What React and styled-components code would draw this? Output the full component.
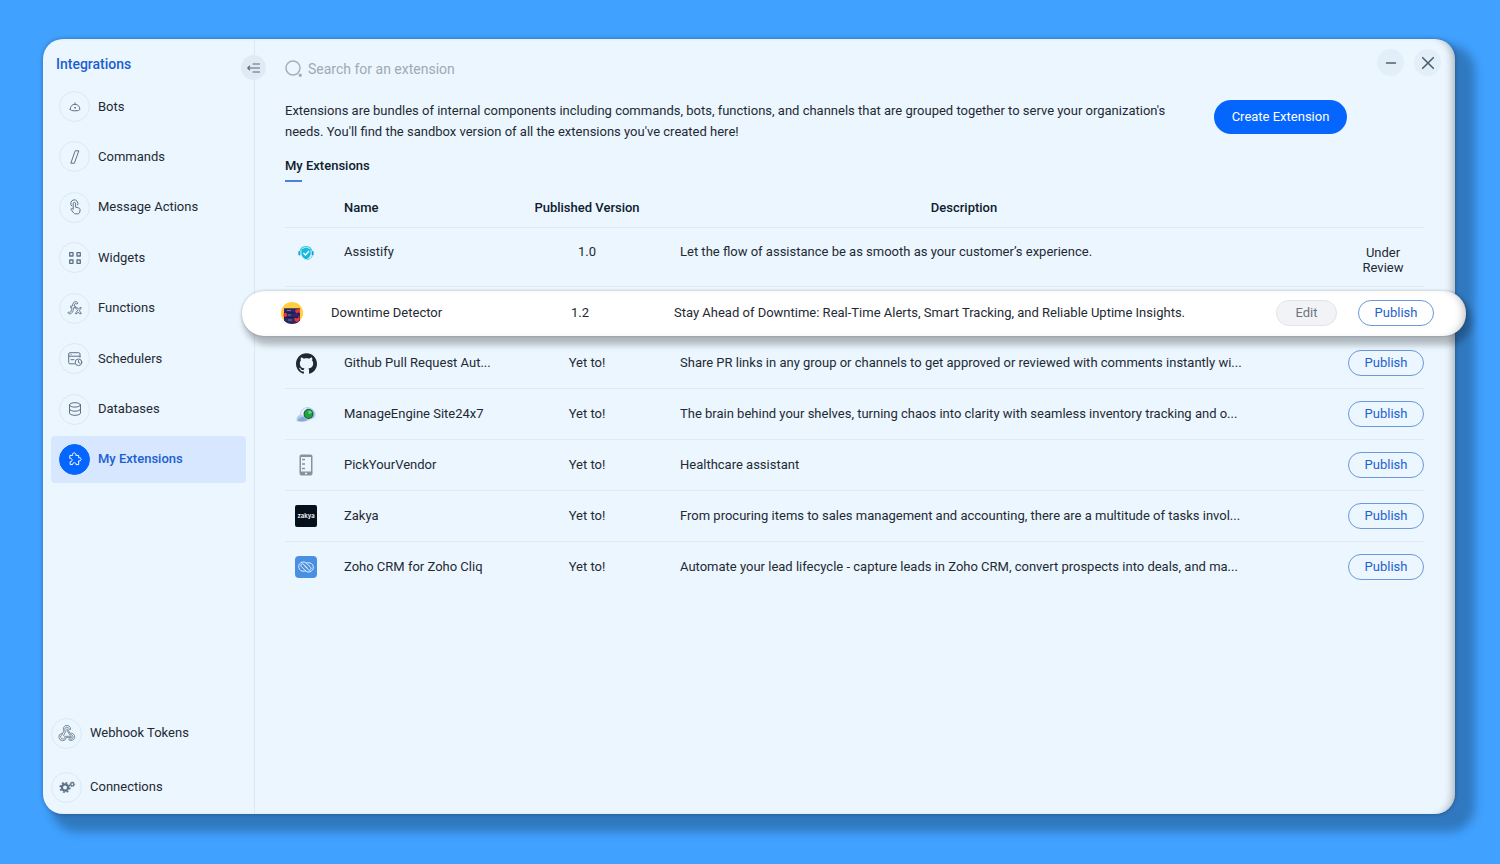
import styled, { createGlobalStyle } from "styled-components";
import { SiGithub } from "react-icons/si";

const Global = createGlobalStyle`
    * { box-sizing: border-box; }
    body { margin: 0; background: #40a1ff; }
`;

const navItems = [
    { label: "Bots", icon: BotIcon },
    { label: "Commands", icon: CommandIcon },
    { label: "Message Actions", icon: TapIcon },
    { label: "Widgets", icon: WidgetIcon },
    { label: "Functions", icon: FunctionIcon },
    { label: "Schedulers", icon: SchedulerIcon },
    { label: "Databases", icon: DatabaseIcon },
    { label: "My Extensions", icon: PuzzleIcon, active: true },
];

const footerItems = [
    { label: "Webhook Tokens", icon: WebhookIcon },
    { label: "Connections", icon: GearsIcon },
];

const extensions = [
    { name: "Assistify", version: "1.0", logo: <AssistifyLogo />, status: "Under Review", text: "Let the flow of assistance be as smooth as your customer’s experience." },
    { name: "Downtime Detector", version: "1.2", logo: <DowntimeLogo />, raised: true, text: "Stay Ahead of Downtime: Real-Time Alerts, Smart Tracking, and Reliable Uptime Insights." },
    { name: "Github Pull Request Aut...", version: "Yet to!", logo: <SiGithub size={21} color="#1f2933" />, text: "Share PR links in any group or channels to get approved or reviewed with comments instantly wi..." },
    { name: "ManageEngine Site24x7", version: "Yet to!", logo: <SiteLogo />, text: "The brain behind your shelves, turning chaos into clarity with seamless inventory tracking and o..." },
    { name: "PickYourVendor", version: "Yet to!", logo: <PhoneLogo />, text: "Healthcare assistant" },
    { name: "Zakya", version: "Yet to!", logo: <ZakyaLogo />, text: "From procuring items to sales management and accounting, there are a multitude of tasks invol..." },
    { name: "Zoho CRM for Zoho Cliq", version: "Yet to!", logo: <CrmLogo />, text: "Automate your lead lifecycle - capture leads in Zoho CRM, convert prospects into deals, and ma..." },
];

const App = () => {
    return (
        <Page>
            <Global />
            <Window>
                <Sidebar>
                    <Title>Integrations</Title>
                    <Toggle aria-label="Collapse sidebar"><CollapseIcon /></Toggle>
                    <NavList>
                        {navItems.map(({ label, icon: Icon, active }) => (
                            <li key={label}>
                                <NavLink href="#" $active={active}>
                                    <Bubble $active={active}><Icon /></Bubble>
                                    {label}
                                </NavLink>
                            </li>
                        ))}
                    </NavList>
                    <FooterList>
                        {footerItems.map(({ label, icon: Icon }) => (
                            <li key={label}>
                                <FooterLink href="#">
                                    <Bubble><Icon /></Bubble>
                                    {label}
                                </FooterLink>
                            </li>
                        ))}
                    </FooterList>
                </Sidebar>
                <Main>
                    <TopBar>
                        <Search>
                            <SearchIcon />
                            <SearchInput type="text" aria-label="Search for an extension" placeholder="Search for an extension" />
                        </Search>
                        <WindowButton aria-label="Minimize"><MinimizeIcon /></WindowButton>
                        <WindowButton aria-label="Close"><CloseIcon /></WindowButton>
                    </TopBar>
                    <Intro>
                        <IntroText>
                            Extensions are bundles of internal components including commands, bots, functions, and channels that are grouped together to serve your organization's needs. You'll find the sandbox version of all the extensions you've created here!
                        </IntroText>
                        <CreateButton>Create Extension</CreateButton>
                    </Intro>
                    <Heading>My Extensions</Heading>
                    <Table>
                        <thead>
                            <HeadRow>
                                <th aria-label="Logo" />
                                <HeadCell>Name</HeadCell>
                                <HeadCell $center>Published Version</HeadCell>
                                <HeadCell $center>Description</HeadCell>
                                <th aria-label="Actions" />
                            </HeadRow>
                        </thead>
                        <tbody>
                            {extensions.map((ext) => (
                                <ExtensionRow key={ext.name} {...ext} />
                            ))}
                        </tbody>
                    </Table>
                </Main>
            </Window>
        </Page>
    );
}

const ExtensionRow = ({ name, version, logo, text, status, raised }) => {
    const RowType = raised ? RaisedRow : status ? TallRow : Row;

    return (
        <RowType>
            <LogoCell>{logo}</LogoCell>
            <Cell>{name}</Cell>
            <Cell $center>{version}</Cell>
            <Cell>{text}</Cell>
            <ActionCell>
                {status && <Status>{status}</Status>}
                {raised && <EditButton>Edit</EditButton>}
                {!status && <PublishButton>Publish</PublishButton>}
            </ActionCell>
        </RowType>
    );
}

const Page = styled.div`
    min-height: 100vh;
    display: flex;
    padding: 39px 45px 50px 43px;
    background: #40a1ff;
    color: #1f2a33;
    font-family: Roboto, sans-serif;
    font-size: 13px;
    line-height: 20px;

    button, input {
        font: inherit;
    }

    button {
        cursor: pointer;
    }
`;

const Window = styled.div`
    flex: 1;
    min-width: 0;
    display: flex;
    border-radius: 20px;
    background: #ebf6ff;
    box-shadow:
        inset -8px 0 8px -6px rgba(0, 0, 0, .3),
        0 0 4px rgba(0, 0, 0, .3),
        14px 12px 10px 6px rgba(0, 0, 0, .25);
`;

const Sidebar = styled.nav`
    position: relative;
    width: 212px;
    flex-shrink: 0;
    display: flex;
    flex-direction: column;
    padding: 15px 8px 12px;
    border-right: 1px solid #dbe7f2;
`;

const Title = styled.h1`
    margin: 0 0 9px 5px;
    font-size: 14px;
    line-height: 20px;
    font-weight: 500;
    color: #1b5fd0;
`;

// sits on top of the sidebar border
const Toggle = styled.button`
    position: absolute;
    top: 16px;
    right: -12px;
    width: 25px;
    height: 25px;
    display: grid;
    place-items: center;
    padding: 0;
    border: 0;
    border-radius: 50%;
    background: #dfeaf5;
`;

const NavList = styled.ul`
    height: 400px;
    display: flex;
    flex-direction: column;
    justify-content: space-between;
    margin: 0;
    padding: 0;
    list-style: none;
`;

const FooterList = styled(NavList)`
    height: auto;
    gap: 24px;
    margin-top: auto;
`;

const NavLink = styled.a`
    height: 47px;
    display: flex;
    align-items: center;
    gap: 8px;
    padding: 0 8px;
    border-radius: 4px;
    font-weight: ${({ $active }) => ($active ? 500 : 400)};
    color: ${({ $active }) => ($active ? "#1b5fd0" : "#1f2a33")};
    background: ${({ $active }) => ($active ? "#d7e7ff" : "transparent")};
    text-decoration: none;
`;

const FooterLink = styled(NavLink)`
    height: 30px;
    padding: 0;
`;

const Bubble = styled.span`
    width: 31px;
    height: 31px;
    flex-shrink: 0;
    display: grid;
    place-items: center;
    border: 1px solid ${({ $active }) => ($active ? "#0566ff" : "#dce8f3")};
    border-radius: 50%;
    color: ${({ $active }) => ($active ? "#fff" : "#5f7285")};
    background: ${({ $active }) => ($active ? "#0566ff" : "transparent")};
`;

const Main = styled.main`
    flex: 1;
    min-width: 0;
`;

const TopBar = styled.div`
    height: 50px;
    display: flex;
    gap: 10px;
    padding: 10px 14px 0 30px;
`;

const Search = styled.label`
    flex: 1;
    height: 40px;
    display: flex;
    align-items: center;
    gap: 6px;
    font-size: 14px;
`;

const SearchInput = styled.input`
    flex: 1;
    padding: 0;
    border: 0;
    outline: 0;
    background: transparent;

    &::placeholder {
        color: #9daab6;
        opacity: 1;
    }
`;

const WindowButton = styled.button`
    width: 27px;
    height: 27px;
    display: grid;
    place-items: center;
    padding: 0;
    border: 0;
    border-radius: 50%;
    background: #e3eff8;
`;

const Intro = styled.div`
    display: flex;
    align-items: flex-start;
    gap: 16px;
    padding: 11px 108px 0 30px;
`;

const IntroText = styled.p`
    flex: 1;
    margin: 0;
    line-height: 21px;
`;

const CreateButton = styled.button`
    width: 133px;
    height: 34px;
    padding: 0;
    border: 0;
    border-radius: 17px;
    background: #0566ff;
    color: #fff;
    font-weight: 500;
`;

const Heading = styled.h2`
    margin: 14px 0 7px 30px;
    font-size: 13px;
    font-weight: 500;
    line-height: 20px;
    color: #10202c;

    &::after {
        content: "";
        display: block;
        width: 17px;
        height: 2px;
        margin-top: 4px;
        background: #4a80e4;
    }
`;

const Table = styled.table`
    display: block;
    padding: 0 31px 0 30px;

    thead, tbody {
        display: block;
    }
`;

const Row = styled.tr`
    height: 51px;
    display: grid;
    grid-template-columns: 59px minmax(0, 150fr) 186px minmax(0, 568fr) 176px;
    align-items: center;
    border-bottom: 1px solid #dfeaf4;

    &:last-child {
        border-bottom-color: transparent;
    }
`;

const HeadRow = styled(Row)`
    height: 39px;

    &:last-child {
        border-bottom-color: #dfeaf4;
    }
`;

const TallRow = styled(Row)`
    height: 59px;
    align-items: start;
    padding-top: 14px;
`;

// lifted card that reaches past both sides of the table
const RaisedRow = styled(Row)`
    position: relative;
    height: 45px;
    grid-template-columns: 60px minmax(0, 155fr) 188px minmax(0, 584fr) 176px;
    margin: 4px -42px 2px -43px;
    padding: 0 32px 2px 29px;
    border: 0;
    border-radius: 22px;
    background: #fff;
    box-shadow:
        inset -8px 0 8px -6px rgba(0, 0, 0, .25),
        0 0 3px rgba(0, 0, 0, .25),
        4px 7px 6px 2px rgba(0, 0, 0, .25);
`;

const HeadCell = styled.th`
    padding: 0;
    font-weight: 500;
    color: #10202c;
    text-align: ${({ $center }) => ($center ? "center" : "left")};
    white-space: nowrap;
`;

const Cell = styled.td`
    padding: 0;
    text-align: ${({ $center }) => ($center ? "center" : "left")};
    white-space: nowrap;
`;

const LogoCell = styled.td`
    width: 42px;
    height: 22px;
    display: grid;
    place-items: center;
    padding: 0;
`;

const ActionCell = styled.td`
    display: flex;
    justify-content: flex-end;
    gap: 21px;
    padding: 0;
`;

const Status = styled.span`
    width: 82px;
    padding: 3px 12px;
    line-height: 15px;
    text-align: center;
`;

const PublishButton = styled.button`
    width: 76px;
    height: 26px;
    padding: 0;
    border: 1px solid #6c97dc;
    border-radius: 13px;
    background: transparent;
    color: #1f62cf;
`;

const EditButton = styled(PublishButton)`
    width: 61px;
    border-color: #e2e4e9;
    background: #f2f3f7;
    color: #70757c;
`;

const Line = styled.svg`
    display: block;
    fill: none;
    stroke: currentColor;
    stroke-width: ${({ $weight }) => $weight || 1};
    stroke-linecap: round;
    stroke-linejoin: round;
`;

function BotIcon() {
    return (
        <Line width="14" height="14" viewBox="0 0 14 14">
            <path d="M2.200 9.300C2.200 6.300 4.200 4.300 7 4.300s4.800 2 4.800 5c0 1.100-1.800 1.500-4.800 1.500s-4.800-.4-4.800-1.500Z" />
            <path d="M7 4.200V2.900" />
            <circle cx="7" cy="7.800" r=".4" fill="currentColor" />
        </Line>
    );
}

function CommandIcon() {
    return (
        <Line width="14" height="14" viewBox="0 0 14 14">
            <path d="M7.600.8h3.200L6.400 13.200H3.200Z" />
        </Line>
    );
}

function TapIcon() {
    return (
        <Line width="16" height="16" viewBox="0 0 16 16">
            <path d="M6.200 10V4.600a1.200 1.200 0 0 1 2.400 0v3.600l3 .7c1 .3 1.600 1 1.500 2l-.4 2.300c-.2 1-.8 1.600-1.800 1.600H8.400c-.8 0-1.300-.3-1.700-.9L4 10.500c-.4-.8.6-1.600 1.300-1z" />
            <path d="M4.400 6.800A3.700 3.700 0 1 1 10.800 5.800" />
        </Line>
    );
}

function WidgetIcon() {
    return (
        <Line width="14" height="14" viewBox="0 0 14 14" $weight={1.3}>
            <path d="M1.700 1.700h3.300v3.300H1.700ZM9 1.700h3.300v3.300H9ZM1.700 9h3.300v3.300H1.700ZM9 9h3.300v3.300H9Z" />
        </Line>
    );
}

function FunctionIcon() {
    return (
        <Line width="16" height="16" viewBox="0 0 16 16" $weight={0.9}>
            <path d="M10.500 3.300c.3-1.900-2.800-2.600-4-.6-.6 1-.9 2.300-1.100 3.300H3.700v1.700H5c-.4 2.300-.8 4.600-2.200 4.700-.7 0-.9-.6-1.300-.4-.9.4-.4 1.800 1.200 1.800C5.600 13.800 6.200 10.600 6.700 7.700h1.600V6H7.100c.3-1.600.7-2.700 1.500-2.700.5 0 .5.700 1.100.7.400 0 .7-.3.800-.7Z" />
            <path d="M8.500 7.700h1.900l1 1.500 1.300-1.500h1.700l-2.100 2.800 2.100 3.200h-1.900l-1.100-1.700-1.400 1.700H8.200l2.300-3.100Z" />
        </Line>
    );
}

function SchedulerIcon() {
    return (
        <Line width="16" height="16" viewBox="0 0 16 16">
            <path d="M7.500 12.800H3A1.300 1.300 0 0 1 1.700 11.500V3A1.300 1.300 0 0 1 3 1.700h8.700A1.300 1.300 0 0 1 13 3v3.300M1.700 5.200H13M4 8.700h3M4 3.500h.1" />
            <circle cx="11.500" cy="11.300" r="3.300" />
            <path d="M11.500 9.500v2l1.400.6" />
        </Line>
    );
}

function DatabaseIcon() {
    return (
        <Line width="14" height="14" viewBox="0 0 14 14">
            <ellipse cx="7" cy="2.900" rx="5.500" ry="2.200" />
            <path d="M1.500 2.900v8.200c0 1.200 2.500 2.200 5.500 2.200s5.500-1 5.500-2.200V2.900M1.500 7c0 1.200 2.500 2.200 5.500 2.200S12.500 8.200 12.500 7" />
        </Line>
    );
}

function PuzzleIcon() {
    return (
        <Line width="14" height="14" viewBox="0 0 14 14">
            <path d="M2.200 3.400h2.500C4.300 2 5 .8 6.200.8S8.200 2 7.800 3.400h2.900v2.500c1.400-.4 2.500.2 2.500 1.400s-1.100 1.800-2.500 1.400v3.900H8c.2-1.200-.5-1.900-1.600-1.900s-1.900.7-1.700 1.900H2.200V9.700c1.200.2 1.900-.5 1.900-1.600s-.7-1.900-1.900-1.700Z" />
        </Line>
    );
}

function WebhookIcon() {
    return (
        <Line width="18" height="18" viewBox="0 0 18 18" $weight={0.8}>
            <path d="M5.900 7.200a3.700 3.700 0 1 1 6.700-1.800c0 .5-1.400.5-1.400 0a2.200 2.200 0 1 0-3.400 1.800L5.500 11.800" />
            <path d="M5.900 7.200 4.300 9.900" />
            <path d="M9.400 4.900l2.600 4.400a3.700 3.700 0 1 1-1.200 6.500c-.4-.4.5-1.400.9-1a2.200 2.200 0 1 0 .1-3.700L8.700 5.700" />
            <path d="M13.400 13.600H8.200a3.700 3.700 0 1 1-4.500-4.200c.5-.1.8 1.200.3 1.400a2.200 2.200 0 1 0 2.900 1.500h6.500" />
        </Line>
    );
}

function GearsIcon() {
    return (
        <Line width="18" height="18" viewBox="0 0 18 18">
            <circle cx="7" cy="9.500" r="3.100" strokeWidth="2.200" />
            <circle cx="7" cy="9.500" r="4.800" strokeWidth="1.600" strokeDasharray="1.900 1.870" strokeLinecap="butt" />
            <circle cx="14.300" cy="6.300" r="1.600" strokeWidth="1.300" />
            <circle cx="14.300" cy="6.300" r="2.400" strokeWidth=".8" strokeDasharray=".9 .98" strokeLinecap="butt" />
        </Line>
    );
}

function CollapseIcon() {
    return (
        <Line width="14" height="12" viewBox="0 0 14 12" color="#56697c" $weight={1.2}>
            <path d="M6 2h6.500M.8 6h11.700M6 10h6.500M2.600 4.200.8 6l1.800 1.800" />
        </Line>
    );
}

function SearchIcon() {
    return (
        <Line width="17" height="18" viewBox="0 0 17 18" color="#a3b1bd" $weight={1.5}>
            <circle cx="8" cy="8" r="7" />
            <circle cx="15.200" cy="15.200" r="1" fill="currentColor" />
        </Line>
    );
}

function MinimizeIcon() {
    return (
        <Line width="12" height="12" viewBox="0 0 12 12" color="#4c5f71" $weight={1.5}>
            <path d="M1.500 6h9" />
        </Line>
    );
}

function CloseIcon() {
    return (
        <Line width="14" height="14" viewBox="0 0 14 14" color="#4c5f71" $weight={1.6}>
            <path d="m1.700 1.700 10.600 10.600M12.300 1.700 1.700 12.300" />
        </Line>
    );
}

function AssistifyLogo() {
    return (
        <svg width="16" height="16" viewBox="0 0 16 16">
            <path d="M2 6.500a6.100 5.900 0 0 1 12 0" fill="none" stroke="#45d3dd" strokeWidth="1.200" />
            <rect x=".4" y="6" width="2" height="4.600" rx="1" fill="#1c9edb" />
            <rect x="13.600" y="6" width="2" height="4.600" rx="1" fill="#1c9edb" />
            <path d="M8 2.600 12.600 4.300v4.800c0 2.600-2.200 4.500-4.600 5.400-2.400-.9-4.600-2.800-4.600-5.400V4.300Z" fill="#14b9dd" />
            <path d="M14.200 10.800c-.5 2-2.500 3.300-5 3.900" fill="none" stroke="#45d3dd" />
            <path d="m5.400 8 2 2 3.600-4" fill="none" stroke="#fff" strokeWidth="1.300" />
        </svg>
    );
}

function DowntimeLogo() {
    return (
        <svg width="22" height="22" viewBox="0 0 22 22">
            <defs>
                <clipPath id="disc"><circle cx="11" cy="11" r="11" /></clipPath>
            </defs>
            <g clipPath="url(#disc)">
                <rect width="22" height="22" fill="#ffcf3f" />
                <path d="M3 6.200h16V22H3Z" fill="#2d2864" />
                <path d="M3 10.800h16M3 15.500h16" stroke="#191744" />
                <path d="M6 8.500h4M7 13h3M7 18h4" stroke="#7673b0" />
                <path d="M2.500 11.500 5 10.500l1.300 2L5 15l-2.500-.5ZM14 8.500l2.500-1.500H19v4l-2-.5-2 1ZM13.500 15.500l2.500 1 2.500-2.500v4l-2.500 2-2.500-1.500Z" fill="#f0323d" />
            </g>
        </svg>
    );
}

function SiteLogo() {
    return (
        <svg width="20" height="18" viewBox="0 0 20 18">
            <path d="M1 16.300C-.5 13.500 1.500 10.500 4 10c0-4 3-7.300 7-8 5 .3 8 3.500 8.500 6.500.6 3.500-2 5.500-5 5.800C10 17 4.500 17.800 1 16.300Z" fill="#b5cdeb" />
            <path d="M1.500 15.500c1-2.500 3.500-3.700 6-3.500 1 1.500 2.800 2.500 4.500 2.700-3 1.500-7.500 2.200-10.500.8Z" fill="#87a9d3" />
            <path d="M5 9.500C5 6 8 3 11 3L8 11Z" fill="#edf5ff" />
            <circle cx="12.500" cy="9" r="5" fill="#235451" />
            <circle cx="12.500" cy="9" r="3.900" fill="#1da43a" />
            <path d="M12.500 9V5.300A3.700 3.700 0 0 1 16 8Z" fill="#5fe06b" />
        </svg>
    );
}

function PhoneLogo() {
    return (
        <svg width="14" height="22" viewBox="0 0 14 22">
            <path d="M2.500.5h9a2 2 0 0 1 2 2v17a2 2 0 0 1-2 2h-9a2 2 0 0 1-2-2v-17a2 2 0 0 1 2-2Z" fill="#87929c" />
            <path d="M2 3h10v14.500H2Z" fill="#ebf6ff" />
            <path d="M3 5.500h3M3 10h3M3 14.500h3" stroke="#87929c" strokeWidth="1.500" />
            <path d="M6 19.500h2" stroke="#ebf6ff" strokeWidth="1.500" />
        </svg>
    );
}

function ZakyaLogo() {
    return (
        <svg width="22" height="22" viewBox="0 0 22 22">
            <rect width="22" height="22" rx="2" fill="#06101c" />
            <text x="11" y="13" textAnchor="middle" fontFamily="Inter, sans-serif" fontSize="6" fontWeight="600" fill="#fff">zakya</text>
        </svg>
    );
}

function CrmLogo() {
    return (
        <svg width="22" height="22" viewBox="0 0 22 22">
            <rect width="22" height="22" rx="4" fill="#4a90e2" />
            <g fill="none" stroke="#e8f3ff" strokeWidth="1" strokeLinecap="round">
                <path d="M10.800 14.700A4.700 4.700 0 1 1 12.200 7.900L15.600 11.400a1.600 1.600 0 0 1-2.300 2.300L9.600 9.900" />
                <path d="M11.200 7.300A4.700 4.700 0 1 1 9.800 14.100L6.400 10.600a1.600 1.600 0 0 1 2.300-2.300L12.400 12.100" />
            </g>
        </svg>
    );
}

export default App;
